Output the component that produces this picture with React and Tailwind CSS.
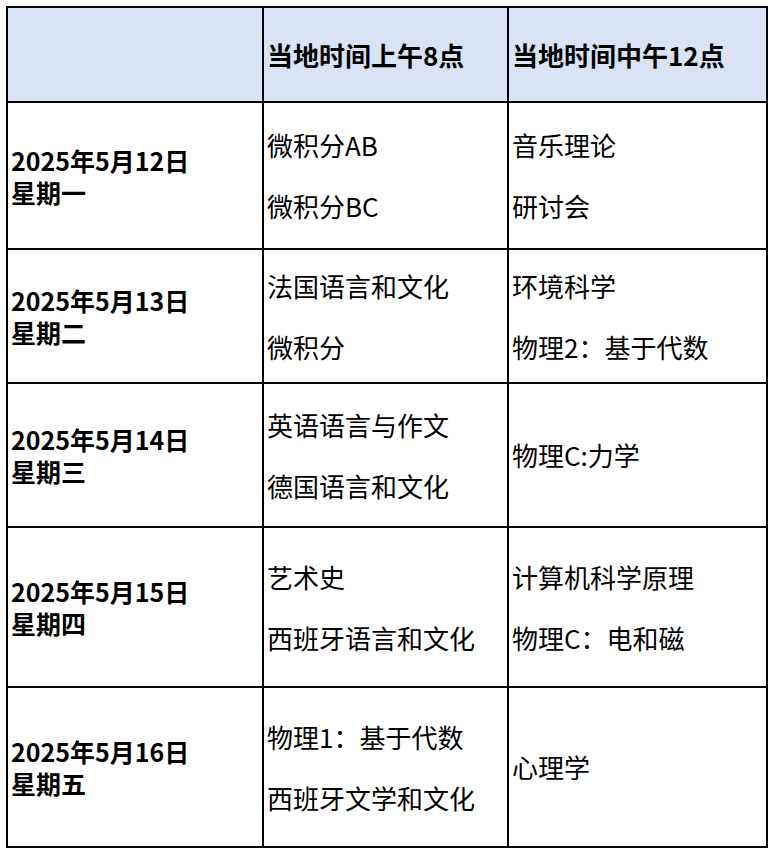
import React from 'react';

const rows = [
  { date: '2025年5月12日', day: '星期一', am: ['微积分AB', '微积分BC'], noon: ['音乐理论', '研讨会'], h: 'h-[147px]' },
  { date: '2025年5月13日', day: '星期二', am: ['法国语言和文化', '微积分'], noon: ['环境科学', '物理2：基于代数'], h: 'h-[134px]' },
  { date: '2025年5月14日', day: '星期三', am: ['英语语言与作文', '德国语言和文化'], noon: ['物理C:力学'], h: 'h-[144px]' },
  { date: '2025年5月15日', day: '星期四', am: ['艺术史', '西班牙语言和文化'], noon: ['计算机科学原理', '物理C：电和磁'], h: 'h-[160px]' },
  { date: '2025年5月16日', day: '星期五', am: ['物理1：基于代数', '西班牙文学和文化'], noon: ['心理学'], h: 'h-[160px]' },
];

const cell = 'border-r-2 border-b-2 border-black flex flex-col justify-center';

const Lines = ({ items }) => (
  <div className={`${cell} pl-[3px] gap-[31px]`}>
    {items.map((t) => (
      <p key={t} className="text-[26px] leading-[30px] text-black whitespace-nowrap">{t}</p>
    ))}
  </div>
);

const App = () => {
  return (
    <div className="bg-white w-[777px] h-[857px] pt-[6px] pl-[6px]" style={{ fontFamily: '"Noto Sans CJK SC", "Noto Sans", sans-serif' }}>
      <div className="grid grid-cols-[256px_245px_259px] w-[762px] border-l-2 border-t-2 border-black">
        <div className={`${cell} h-[95px] bg-[#dae3f3]`}></div>
        <div className={`${cell} h-[95px] bg-[#dae3f3] pl-[3px]`}>
          <p className="text-[26px] font-bold leading-[30px] text-black whitespace-nowrap">当地时间上午8点</p>
        </div>
        <div className={`${cell} h-[95px] bg-[#dae3f3] pl-[3px]`}>
          <p className="text-[26px] font-bold leading-[30px] text-black whitespace-nowrap">当地时间中午12点</p>
        </div>
        {rows.map((r) => (
          <React.Fragment key={r.date}>
            <div className={`${cell} ${r.h} pl-[3px]`}>
              <p className="text-[25px] font-bold leading-[32px] text-black whitespace-nowrap">
                {r.date}
                <br />
                {r.day}
              </p>
            </div>
            <Lines items={r.am} />
            <Lines items={r.noon} />
          </React.Fragment>
        ))}
      </div>
    </div>
  );
};

export default App;
